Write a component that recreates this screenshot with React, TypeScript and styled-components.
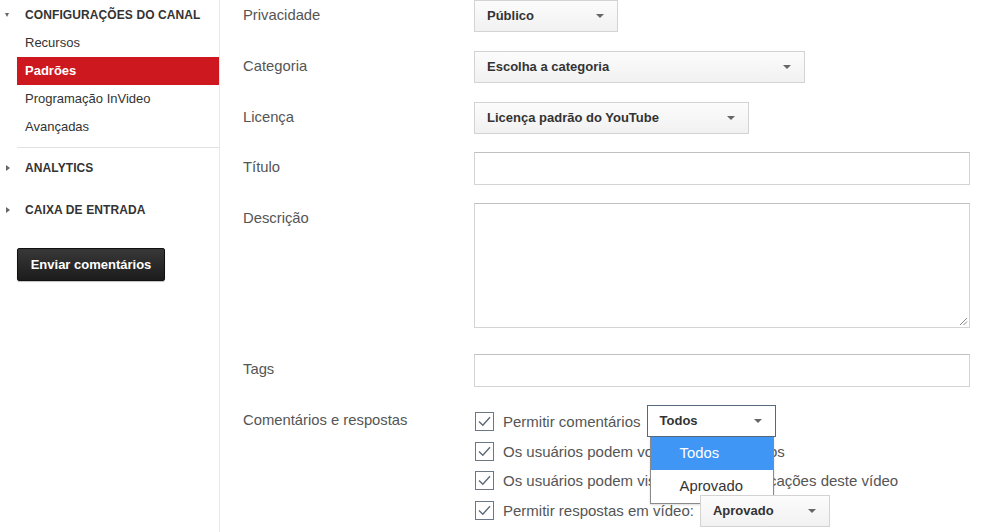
import React from "react";
import styled, { createGlobalStyle } from "styled-components";

const GlobalStyle = createGlobalStyle`
  body {
    margin: 0;
    background: #fff;
    font-family: "Liberation Sans", Arial, sans-serif;
    color: #333;
  }
`;

const Page = styled.div`
  display: flex;
  height: 532px;
  overflow: hidden;
`;

const Sidebar = styled.nav`
  width: 219px;
  flex-shrink: 0;
  border-right: 1px solid #e8e8e8;
  padding-top: 1px;
`;

const SectionHeader = styled.div<{ $gap?: number; $open?: boolean }>`
  position: relative;
  height: 28px;
  line-height: 28px;
  margin-top: ${(p) => p.$gap ?? 0}px;
  padding-left: 25px;
  font-size: 12px;
  font-weight: bold;
  text-transform: uppercase;
  letter-spacing: 0.1px;
  color: #333;

  &::before {
    content: "";
    position: absolute;
    left: ${(p) => (p.$open ? 5 : 6)}px;
    top: ${(p) => (p.$open ? 12 : 11)}px;
    border-style: solid;
    border-color: transparent;
    ${(p) =>
      p.$open
        ? "border-width: 4px 2.5px 0 2.5px; border-top-color: #666;"
        : "border-width: 3px 0 3px 4px; border-left-color: #666;"}
  }
`;

const NavList = styled.ul`
  list-style: none;
  margin: 0 0 0 17px;
  padding: 0 0 6px;
  border-bottom: 1px solid #e2e2e2;
`;

const NavItem = styled.li<{ $active?: boolean }>`
  height: 28px;
  line-height: 28px;
  padding-left: 8px;
  font-size: 13px;
  color: ${(p) => (p.$active ? "#fff" : "#333")};
  font-weight: ${(p) => (p.$active ? "bold" : "normal")};
  background: ${(p) => (p.$active ? "#cc181e" : "transparent")};
`;

const FeedbackButton = styled.button`
  display: block;
  margin: 24px 0 0 17px;
  width: 148px;
  height: 33px;
  border: 1px solid #111;
  border-radius: 2px;
  background: linear-gradient(#383838, #1c1c1c);
  color: #fff;
  font-family: inherit;
  font-size: 13px;
  font-weight: bold;
  box-shadow: 0 1px 1px rgba(0, 0, 0, 0.25);
`;

const Main = styled.main`
  flex: 1;
  padding-left: 23px;
`;

const FormRow = styled.div<{ $gap: number }>`
  display: flex;
  align-items: flex-start;
  margin-bottom: ${(p) => p.$gap}px;
`;

const Label = styled.label`
  width: 231px;
  flex-shrink: 0;
  padding-top: 7px;
  font-size: 14.8px;
  line-height: 17px;
  color: #555;
`;

const Select = styled.div<{ $width: number; $focused?: boolean }>`
  position: relative;
  box-sizing: border-box;
  width: ${(p) => p.$width}px;
  height: 32px;
  line-height: 30px;
  padding-left: 12px;
  border: 1px solid ${(p) => (p.$focused ? "#56687b" : "#d3d3d3")};
  background: ${(p) => (p.$focused ? "#fff" : "linear-gradient(#fcfcfc, #f1f1f1)")};
  font-size: 13px;
  font-weight: bold;
  color: #333;
  flex-shrink: 0;

  &::after {
    content: "";
    position: absolute;
    right: 13px;
    top: 13px;
    border-style: solid;
    border-color: #666 transparent transparent;
    border-width: 4px 4px 0 4px;
  }
`;

const TextInput = styled.div<{ $height: number }>`
  position: relative;
  box-sizing: border-box;
  width: 496px;
  height: ${(p) => p.$height}px;
  border: 1px solid #d4d4d4;
  border-top-color: #c0c0c0;
  background: #fff;
`;

const Grip = styled.svg`
  position: absolute;
  right: 1px;
  bottom: 1px;
`;

const OptionsColumn = styled.div`
  display: flex;
  flex-direction: column;
`;

const CheckRow = styled.div<{ $height: number }>`
  display: flex;
  align-items: center;
  height: ${(p) => p.$height}px;
  font-size: 15px;
  color: #555;
  white-space: nowrap;
`;

const Box = styled.span`
  box-sizing: border-box;
  width: 19px;
  height: 19px;
  margin: 0 9px 0 1px;
  border: 1px solid #6b7785;
  background: #fff;
  display: flex;
  align-items: center;
  justify-content: center;
  flex-shrink: 0;
`;

const SelectWrap = styled.div<{ $left: number }>`
  position: relative;
  margin-left: ${(p) => p.$left}px;
  z-index: 2;
`;

const Menu = styled.ul`
  position: absolute;
  top: 32px;
  left: 3px;
  width: 122px;
  margin: 0;
  padding: 0;
  list-style: none;
  border: 1px solid #8a8a8a;
  border-top: none;
  background: #fff;
  box-shadow: 0 1px 2px rgba(0, 0, 0, 0.15);
`;

const MenuItem = styled.li<{ $selected?: boolean }>`
  height: 33px;
  line-height: 33px;
  padding-left: 29px;
  font-size: 14.8px;
  font-weight: normal;
  color: ${(p) => (p.$selected ? "#fff" : "#333")};
  background: ${(p) => (p.$selected ? "#3f96f5" : "#fff")};
`;

const Check = () => (
  <Box>
    <svg width="13" height="11" viewBox="0 0 13 11">
      <path d="M1 5.5 L4.8 9.2 L12 1.2" fill="none" stroke="#5d6977" strokeWidth="1.4" />
    </svg>
  </Box>
);

function App() {
  return (
    <>
      <GlobalStyle />
      <Page>
        <Sidebar>
          <SectionHeader $open>Configurações do canal</SectionHeader>
          <NavList>
            <NavItem>Recursos</NavItem>
            <NavItem $active>Padrões</NavItem>
            <NavItem>Programação InVideo</NavItem>
            <NavItem>Avançadas</NavItem>
          </NavList>
          <SectionHeader $gap={6}>Analytics</SectionHeader>
          <SectionHeader $gap={14}>Caixa de entrada</SectionHeader>
          <FeedbackButton>Enviar comentários</FeedbackButton>
        </Sidebar>
        <Main>
          <FormRow $gap={19}>
            <Label>Privacidade</Label>
            <Select $width={144}>Público</Select>
          </FormRow>
          <FormRow $gap={19}>
            <Label>Categoria</Label>
            <Select $width={331}>Escolha a categoria</Select>
          </FormRow>
          <FormRow $gap={18}>
            <Label>Licença</Label>
            <Select $width={275}>Licença padrão do YouTube</Select>
          </FormRow>
          <FormRow $gap={18}>
            <Label>Título</Label>
            <TextInput $height={33} />
          </FormRow>
          <FormRow $gap={26}>
            <Label>Descrição</Label>
            <TextInput $height={125}>
              <Grip width="10" height="10" viewBox="0 0 10 10">
                <path d="M9 2 L2 9 M9 5.5 L5.5 9" stroke="#888" strokeWidth="1" />
              </Grip>
            </TextInput>
          </FormRow>
          <FormRow $gap={18}>
            <Label>Tags</Label>
            <TextInput $height={33} />
          </FormRow>
          <FormRow $gap={0}>
            <Label>Comentários e respostas</Label>
            <OptionsColumn>
              <CheckRow $height={32}>
                <Check />
                Permitir comentários
                <SelectWrap $left={6}>
                  <Select $width={129} $focused>
                    Todos
                  </Select>
                  <Menu>
                    <MenuItem $selected>Todos</MenuItem>
                    <MenuItem>Aprovado</MenuItem>
                  </Menu>
                </SelectWrap>
              </CheckRow>
              <CheckRow $height={29}>
                <Check />
                Os usuários podem votar nos comentários
              </CheckRow>
              <CheckRow $height={28}>
                <Check />
                Os usuários podem visualizar as classificações deste vídeo
              </CheckRow>
              <CheckRow $height={33}>
                <Check />
                Permitir respostas em vídeo:
                <SelectWrap $left={6}>
                  <Select $width={130}>Aprovado</Select>
                </SelectWrap>
              </CheckRow>
            </OptionsColumn>
          </FormRow>
        </Main>
      </Page>
    </>
  );
}

export default App;
